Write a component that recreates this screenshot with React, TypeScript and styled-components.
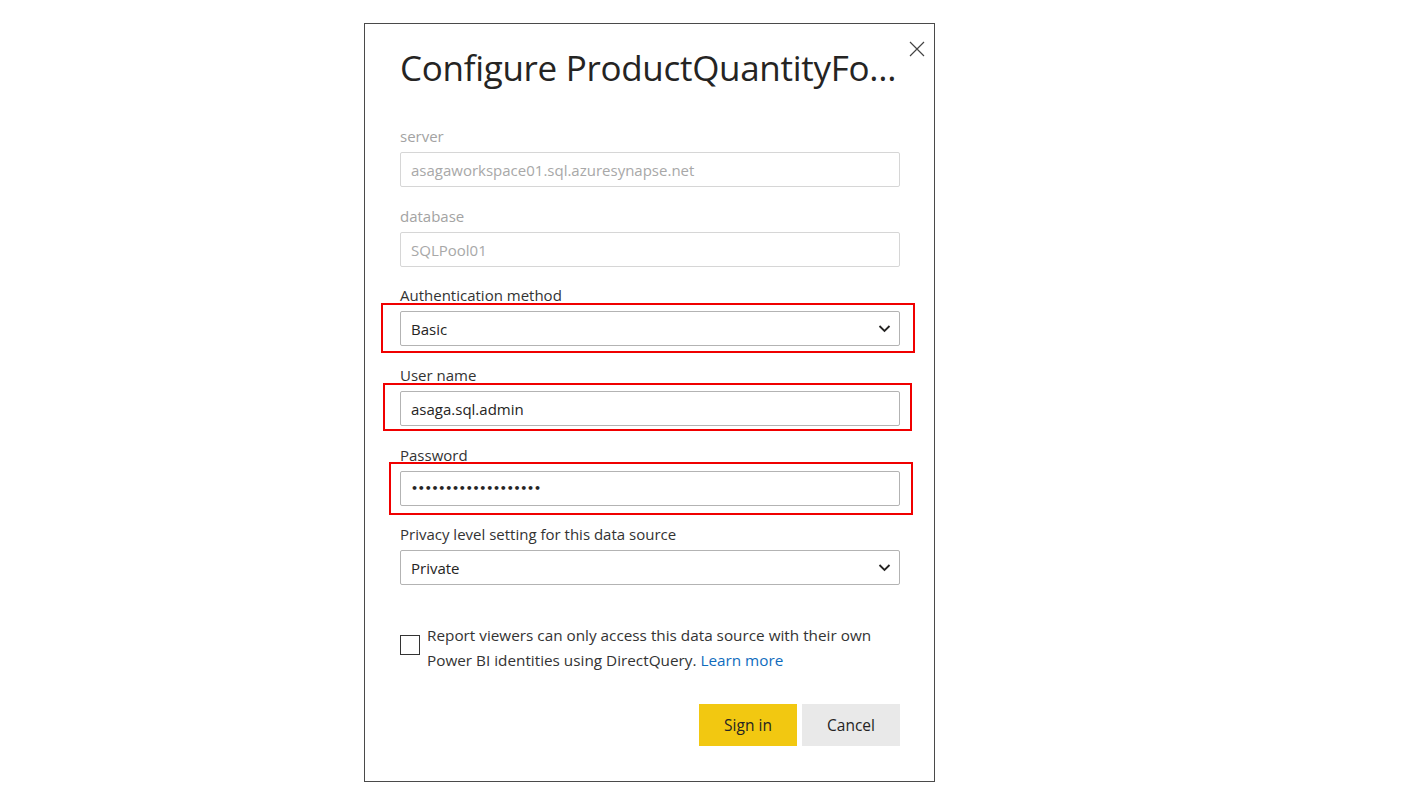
import React from "react";
import styled, { createGlobalStyle } from "styled-components";

const Global = createGlobalStyle`
  html, body { margin: 0; padding: 0; background: #fff; }
  body { font-family: "Open Sans", "Noto Sans", sans-serif; color: #333; }
`;

const Page = styled.div`
  width: 1425px;
  height: 802px;
  padding: 23px 0 0 364px;
  box-sizing: border-box;
`;

const Dialog = styled.div`
  position: relative;
  width: 571px;
  height: 759px;
  box-sizing: border-box;
  border: 1px solid #4a4a4a;
  padding: 20px 35px 0 35px;
  display: flex;
  flex-direction: column;
  background: #fff;
`;

const Title = styled.h1`
  margin: 0;
  font-family: "Open Sans", sans-serif;
  font-weight: 400;
  font-size: 35px;
  line-height: 48px;
  height: 48px;
  color: #252423;
  white-space: nowrap;
  overflow: hidden;
  text-overflow: ellipsis;
  width: 500px;
  letter-spacing: -0.3px;
`;

const CloseButton = styled.button`
  position: absolute;
  top: 15px;
  right: 7px;
  width: 20px;
  height: 20px;
  padding: 0;
  border: none;
  background: transparent;
  display: flex;
  align-items: center;
  justify-content: center;
  color: #444;
`;

const Form = styled.div`
  display: flex;
  flex-direction: column;
  margin-top: 34px;
`;

const Field = styled.div<{ $gapTop: number }>`
  position: relative;
  display: flex;
  flex-direction: column;
  margin-top: ${(p) => p.$gapTop}px;
`;

const Label = styled.label<{ $disabled?: boolean }>`
  font-size: 15px;
  line-height: 20px;
  height: 20px;
  color: ${(p) => (p.$disabled ? "#a3a3a3" : "#333")};
  margin-bottom: 6px;
`;

const InputBox = styled.div<{ $disabled?: boolean }>`
  position: relative;
  width: 500px;
  height: 35px;
  box-sizing: border-box;
  border: 1px solid ${(p) => (p.$disabled ? "#d6d6d6" : "#b3b3b3")};
  border-radius: 2px;
  display: flex;
  align-items: center;
  justify-content: space-between;
  padding: 0 8px 0 10px;
  font-size: 15px;
  color: ${(p) => (p.$disabled ? "#a8a8a8" : "#252423")};
  background: #fff;
`;

const Dots = styled.span`
  font-size: 11px;
  letter-spacing: -0.2px;
  color: #252423;
  font-family: "DejaVu Sans", sans-serif;
  font-weight: bold;
`;

const Highlight = styled.div<{ $t: number; $r: number; $b: number; $l: number }>`
  position: absolute;
  top: ${(p) => p.$t}px;
  right: ${(p) => p.$r}px;
  bottom: ${(p) => p.$b}px;
  left: ${(p) => p.$l}px;
  border: 2px solid #f00000;
  pointer-events: none;
`;

const CheckRow = styled.div`
  display: flex;
  align-items: flex-start;
  gap: 7px;
  margin-top: 38px;
`;

const Checkbox = styled.div`
  width: 20px;
  height: 20px;
  box-sizing: border-box;
  border: 1.5px solid #333;
  margin-top: 12px;
  flex-shrink: 0;
`;

const CheckText = styled.div`
  font-size: 15.3px;
  line-height: 25px;
  color: #333;
  width: 470px;
`;

const Link = styled.a`
  color: #0f6cbd;
  text-decoration: none;
`;

const Buttons = styled.div`
  display: flex;
  justify-content: flex-end;
  gap: 5px;
  margin-top: 31px;
  width: 500px;
`;

const Button = styled.button<{ $primary?: boolean }>`
  width: 98px;
  height: 42px;
  border: none;
  border-radius: 0;
  font-family: "Open Sans", sans-serif;
  font-size: 15.5px;
  color: #252423;
  background: ${(p) => (p.$primary ? "#f2c811" : "#e9e9e9")};
  padding: 0;
`;

const Chevron = () => (
  <svg width="13" height="9" viewBox="0 0 13 9" fill="none">
    <path d="M1.5 2 L6.5 7 L11.5 2" stroke="#252423" strokeWidth="1.8" />
  </svg>
);

export default function App() {
  return (
    <>
      <Global />
      <Page>
        <Dialog>
          <CloseButton aria-label="Close">
            <svg width="16" height="16" viewBox="0 0 16 16">
              <path d="M1 1 L15 15 M15 1 L1 15" stroke="#444" strokeWidth="1.2" />
            </svg>
          </CloseButton>
          <Title>Configure ProductQuantityForecast</Title>
          <Form>
            <Field $gapTop={0}>
              <Label $disabled>server</Label>
              <InputBox $disabled>asagaworkspace01.sql.azuresynapse.net</InputBox>
            </Field>
            <Field $gapTop={19}>
              <Label $disabled>database</Label>
              <InputBox $disabled>SQLPool01</InputBox>
            </Field>
            <Field $gapTop={18}>
              <Label>Authentication method</Label>
              <InputBox>
                <span>Basic</span>
                <Chevron />
              </InputBox>
              <Highlight $t={18} $r={-16} $b={-7} $l={-19} />
            </Field>
            <Field $gapTop={19}>
              <Label>User name</Label>
              <InputBox>asaga.sql.admin</InputBox>
              <Highlight $t={18} $r={-13} $b={-5} $l={-17} />
            </Field>
            <Field $gapTop={19}>
              <Label>Password</Label>
              <InputBox>
                <Dots>•••••••••••••••••••</Dots>
              </InputBox>
              <Highlight $t={17} $r={-14} $b={-9} $l={-11} />
            </Field>
            <Field $gapTop={18}>
              <Label>Privacy level setting for this data source</Label>
              <InputBox>
                <span>Private</span>
                <Chevron />
              </InputBox>
            </Field>
          </Form>
          <CheckRow>
            <Checkbox />
            <CheckText>
              Report viewers can only access this data source with their own
              <br />
              Power BI identities using DirectQuery. <Link href="#">Learn more</Link>
            </CheckText>
          </CheckRow>
          <Buttons>
            <Button $primary>Sign in</Button>
            <Button>Cancel</Button>
          </Buttons>
        </Dialog>
      </Page>
    </>
  );
}
